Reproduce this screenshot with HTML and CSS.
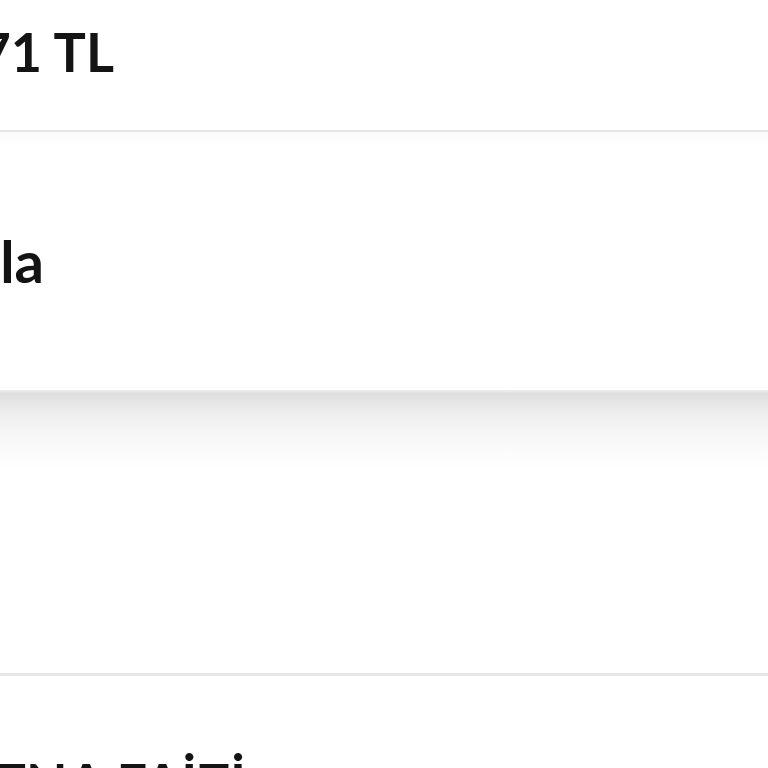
FILE: index.html
```html
<!DOCTYPE html>
<html lang="tr">
<head>
<meta charset="utf-8">
<title>Ödeme</title>
<link rel="stylesheet" href="styles.css">
</head>
<body>
  <div class="page">
    <section class="row row-price">
      <div class="clip clip-price"><span class="big">1.371 TL</span></div>
    </section>
    <div class="divider thin"></div>
    <section class="row row-note">
      <div class="clip clip-note"><span class="bigger">Kartla</span></div>
    </section>
    <div class="band"></div>
    <div class="divider thick"></div>
    <section class="row row-rate">
      <div class="clip clip-rate"><span class="big">ETNA FAİZİ</span></div>
    </section>
  </div>
</body>
</html>
```

FILE: styles.css
```css
html, body {
  margin: 0;
  padding: 0;
  background: #ffffff;
  overflow: hidden;
}

body {
  font-family: Lato, "Open Sans", "Liberation Sans", sans-serif;
  color: #141414;
}

.page {
  width: 768px;
  height: 768px;
  overflow: hidden;
  display: flex;
  flex-direction: column;
}

.row {
  flex: none;
  background: #ffffff;
}

.clip {
  display: flex;
  justify-content: flex-end;
  white-space: nowrap;
}

.big {
  font-size: 54px;
  line-height: 54px;
  font-weight: 700;
}

.bigger {
  font-size: 58px;
  line-height: 58px;
  font-weight: 700;
}

.row-price {
  height: 130px;
  padding-top: 25px;
  box-sizing: border-box;
}

.clip-price { width: 114px; }

.divider {
  flex: none;
  background: #e6e6e6;
}

.divider.thin { height: 2px; }
.divider.thick { height: 3px; background: #e7e7e7; }

.row-note {
  height: 258px;
  padding-top: 100px;
  box-sizing: border-box;
  background: linear-gradient(to bottom, #f9f9f9 0, #fdfdfd 8px, #ffffff 14px);
}

.clip-note { width: 44px; }

.band {
  flex: none;
  height: 283px;
  background: linear-gradient(to bottom,
    #eeeeee 0,
    #dfdfdf 4px,
    #e4e4e4 10px,
    #eaeaea 18px,
    #f0f0f0 28px,
    #f5f5f5 40px,
    #f9f9f9 54px,
    #fdfdfd 68px,
    #ffffff 80px);
}

.row-rate {
  padding-top: 80px;
}

.clip-rate { width: 246px; }
```
